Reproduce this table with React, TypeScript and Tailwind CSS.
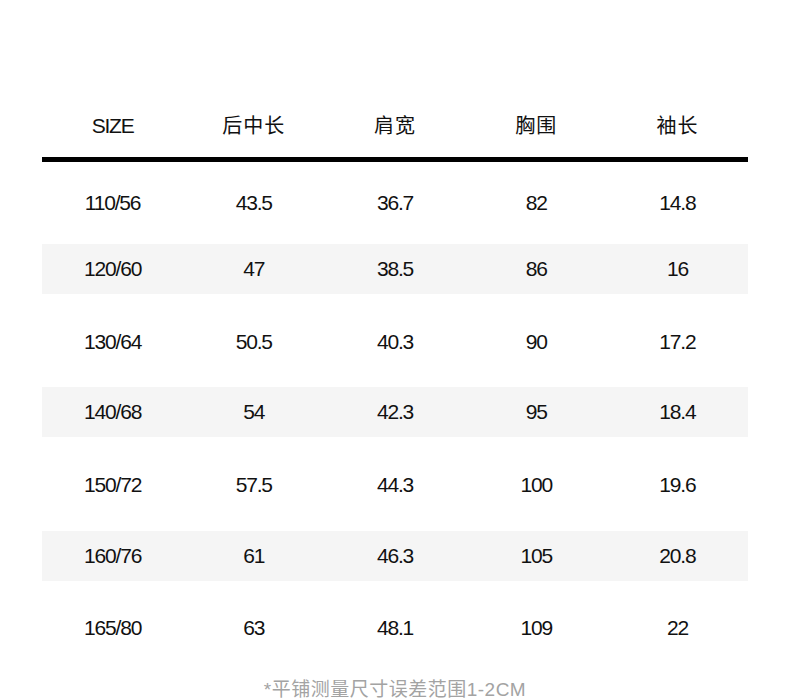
import React from "react"

const headers = ["SIZE", "后中长", "肩宽", "胸围", "袖长"]

const rows = [
  ["110/56", "43.5", "36.7", "82", "14.8"],
  ["120/60", "47", "38.5", "86", "16"],
  ["130/64", "50.5", "40.3", "90", "17.2"],
  ["140/68", "54", "42.3", "95", "18.4"],
  ["150/72", "57.5", "44.3", "100", "19.6"],
  ["160/76", "61", "46.3", "105", "20.8"],
  ["165/80", "63", "48.1", "109", "22"],
]

// spacing above each row, measured off the picture
const gaps = ["mt-[16px]", "mt-[16px]", "mt-[23px]", "mt-[20px]", "mt-[23px]", "mt-[21px]", "mt-[22px]"]

const font = "font-['Liberation_Sans','Noto_Sans_CJK_SC',sans-serif]"

export default function App() {
  return (
    <div className={`w-[790px] h-[700px] bg-white overflow-hidden ${font} text-[#111]`}>
      <div className="mx-[42px] w-[706px] pt-[101px]">
        <div className="grid grid-cols-5 h-[50px] items-center text-center text-[20px]">
          {headers.map((h) => (
            <div key={h} className={h === "SIZE" ? "text-[21px] tracking-[-1.2px]" : "tracking-[1px]"}>
              {h}
            </div>
          ))}
        </div>
        <div className="mt-[6px] h-[5px] bg-black" />

        {rows.map((r, i) => (
          <div
            key={r[0]}
            className={`${gaps[i]} grid grid-cols-5 h-[50px] items-center text-center text-[21px] tracking-[-1.2px] ${
              i % 2 === 1 ? "bg-[#f5f5f5]" : ""
            }`}
          >
            {r.map((c, j) => (
              <div key={j}>{c}</div>
            ))}
          </div>
        ))}

        <div className="mt-[25px] text-center text-[19px] leading-[24px] tracking-[0.5px] text-[#a3a3a3]">
          *平铺测量尺寸误差范围1-2CM
        </div>
      </div>
    </div>
  )
}
